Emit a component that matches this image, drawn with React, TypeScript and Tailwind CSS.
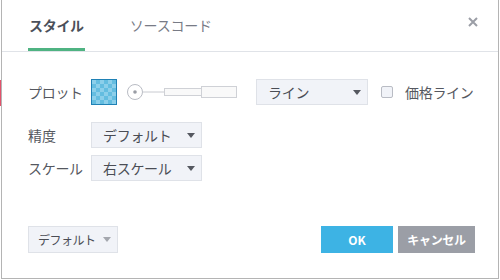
const font = "font-['Noto_Sans_CJK_JP','Noto_Sans',sans-serif]";

function Caret({ className = "" }: { className?: string }) {
  return (
    <svg width="8" height="5" viewBox="0 0 8 5" className={className}>
      <path d="M0 0h8L4 5z" fill="currentColor" />
    </svg>
  );
}

function Select({ label, width }: { label: string; width: string }) {
  return (
    <div
      className={`flex h-[26px] ${width} items-center justify-between border border-[#dfe2e8] bg-[#f1f3f8] pl-[11px] pr-[6px] text-[14px] text-[#4a4d55]`}
    >
      <span className="whitespace-nowrap tracking-[-0.3px]">{label}</span>
      <Caret className="text-[#555860]" />
    </div>
  );
}

function Swatch() {
  return (
    <div className="h-[26px] w-[26px] border border-[#1f81b5]">
      <svg width="24" height="24" viewBox="0 0 24 24" className="block">
        <defs>
          <pattern id="chk" width="8" height="8" patternUnits="userSpaceOnUse">
            <rect width="8" height="8" fill="#64bde0" />
            <rect width="4" height="4" fill="#8ccfea" />
            <rect x="4" y="4" width="4" height="4" fill="#8ccfea" />
          </pattern>
        </defs>
        <rect width="24" height="24" fill="url(#chk)" />
      </svg>
    </div>
  );
}

function Slider() {
  return (
    <svg width="112" height="20" viewBox="0 0 112 20" className="ml-[9px]">
      <circle cx="9" cy="10" r="7.5" fill="#fff" stroke="#b9bcc4" strokeWidth="1" />
      <circle cx="9" cy="10" r="1.8" fill="#9a9da5" />
      <line x1="16.5" y1="10" x2="38" y2="10" stroke="#c8cad0" />
      <rect x="38.5" y="6.5" width="37" height="7" fill="#f9f9f9" stroke="#cfd1d6" />
      <rect x="75.5" y="4.5" width="35" height="11" fill="#f9f9f9" stroke="#cfd1d6" />
    </svg>
  );
}

export default function App() {
  return (
    <div className={`relative h-[280px] w-[500px] bg-white pl-px ${font}`}>
      <div className="absolute left-0 top-[80px] h-[26px] w-px bg-[#e2536b]" />
      <div className="flex h-[279px] w-[498px] flex-col border-x border-b border-[#b4b4b4] bg-white">
        <div className="flex h-[52px] items-end justify-between border-b border-[#e0e3e8] pl-[26px] pr-[20px]">
          <div className="flex items-end gap-[45px]">
            <div className="flex flex-col">
              <span className="px-px pb-[13px] text-[14px] font-bold leading-[20px] tracking-[-0.3px] text-[#4b505a]">スタイル</span>
              <div className="h-[3px] bg-[#4fb382]" />
            </div>
            <span className="pb-[16px] text-[14px] leading-[20px] tracking-[-0.2px] text-[#787b86]">ソースコード</span>
          </div>
          <svg width="10" height="10" viewBox="0 0 10 10" className="mb-[24px]">
            <path d="M1 1l8 8M9 1L1 9" stroke="#9b9ea6" strokeWidth="2" />
          </svg>
        </div>

        <div className="flex flex-col pl-[26px] pt-[27px] text-[14px] text-[#555860]">
          <div className="flex h-[26px] items-center">
            <span className="w-[63px] tracking-[-0.3px]">プロット</span>
            <Swatch />
            <Slider />
            <div className="ml-[18px]">
              <Select label="ライン" width="w-[112px]" />
            </div>
            <div className="ml-[13px] h-[12px] w-[12px] rounded-[2px] border border-[#b9bcc4] bg-[#f1f3f8]" />
            <span className="ml-[12px] tracking-[-0.3px]">価格ライン</span>
          </div>
          <div className="mt-[17px] flex h-[26px] items-center">
            <span className="w-[63px]">精度</span>
            <Select label="デフォルト" width="w-[111px]" />
          </div>
          <div className="mt-[7px] flex h-[26px] items-center">
            <span className="w-[63px] tracking-[-0.3px]">スケール</span>
            <Select label="右スケール" width="w-[111px]" />
          </div>
        </div>

        <div className="mt-auto mb-[25px] flex items-center justify-between pl-[26px] pr-[23px]">
          <div className="flex h-[27px] w-[90px] items-center gap-[7px] border border-[#dfe2e8] bg-[#f1f3f8] pl-[9px] text-[12px] text-[#4a4d55]">
            <span className="whitespace-nowrap tracking-[-0.5px]">デフォルト</span>
            <Caret className="text-[#a4a7ae]" />
          </div>
          <div className="flex gap-[5px]">
            <button className="h-[27px] w-[72px] bg-[#3db3e4] text-[12px] font-bold text-white">OK</button>
            <button className="h-[27px] w-[77px] whitespace-nowrap bg-[#9b9ea6] text-[12px] font-bold tracking-[-0.3px] text-white">キャンセル</button>
          </div>
        </div>
      </div>
    </div>
  );
}
